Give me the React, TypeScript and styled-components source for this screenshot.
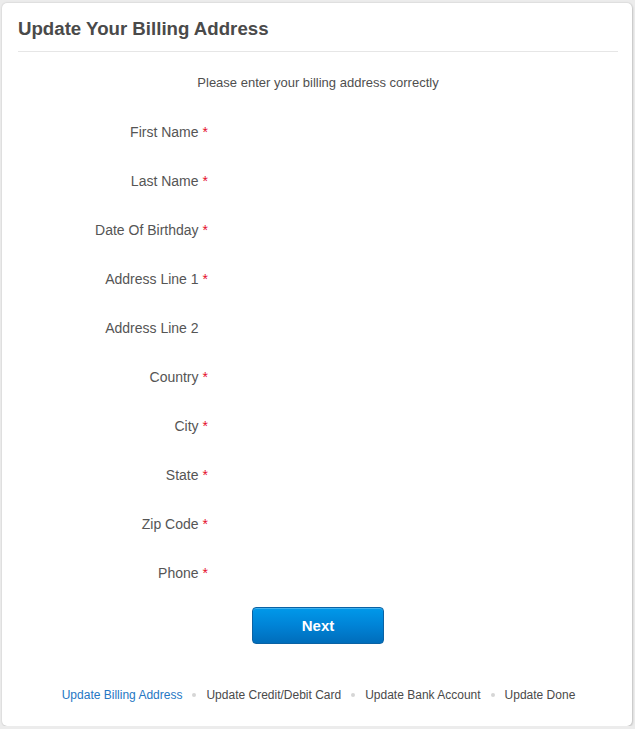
import React from "react";
import styled, { createGlobalStyle } from "styled-components";

const Global = createGlobalStyle`
  html, body { margin: 0; padding: 0; background: #ececec; }
  body { font-family: "Liberation Sans", Arial, sans-serif; }
`;

const Card = styled.div`
  box-sizing: border-box;
  margin: 3px 3px 0 2px;
  width: 630px;
  height: 723px;
  background: #fff;
  border-radius: 5px;
  box-shadow: 0 0 2px rgba(0, 0, 0, 0.18), 1px 1px 2px rgba(0, 0, 0, 0.12);
  padding: 0 14px 0 16px;
  display: flex;
  flex-direction: column;
`;

const Header = styled.div`
  height: 49px;
  display: flex;
  align-items: center;
  border-bottom: 1px solid #e6e6e6;
  box-sizing: border-box;
  padding-top: 3px;
`;

const Title = styled.h1`
  margin: 0;
  font-size: 18.67px;
  font-weight: bold;
  color: #4a4a4a;
  line-height: 22px;
`;

const Subtitle = styled.p`
  margin: 21px 0 0;
  text-align: center;
  font-size: 13px;
  line-height: 20px;
  color: #4f4f4f;
`;

const Form = styled.div`
  margin-top: 14px;
  display: flex;
  flex-direction: column;
`;

const Row = styled.div`
  display: flex;
  align-items: center;
  height: 49px;
`;

const Label = styled.label`
  width: 190px;
  text-align: right;
  font-size: 14px;
  color: #555;
  line-height: 20px;
`;

const Req = styled.span<{ $hidden?: boolean }>`
  color: #e5102b;
  margin-left: 4px;
  visibility: ${(p) => (p.$hidden ? "hidden" : "visible")};
`;

const ButtonWrap = styled.div`
  display: flex;
  justify-content: center;
  margin-top: 10px;
`;

const NextButton = styled.button`
  width: 132px;
  height: 37px;
  box-sizing: border-box;
  border: 1px solid #0a62a4;
  border-radius: 4px;
  background: linear-gradient(to bottom, #0099ea 0%, #0083d6 50%, #006dbb 100%);
  color: #fff;
  font-family: "Liberation Sans", Arial, sans-serif;
  font-weight: bold;
  font-size: 15px;
  cursor: pointer;
  box-shadow: inset 0 1px 0 rgba(255, 255, 255, 0.25);
`;

const Steps = styled.nav`
  margin-top: 41px;
  display: flex;
  justify-content: center;
  align-items: center;
  font-size: 12px;
  line-height: 20px;
  padding-left: 1px;
`;

const Step = styled.span<{ $active?: boolean }>`
  color: ${(p) => (p.$active ? "#2577c4" : "#4a4a4a")};
`;

const Dot = styled.span`
  width: 4px;
  height: 4px;
  border-radius: 50%;
  background: #d6d6d6;
  margin: 0 10px;
`;

const fields: [string, boolean][] = [
  ["First Name", true],
  ["Last Name", true],
  ["Date Of Birthday", true],
  ["Address Line 1", true],
  ["Address Line 2", false],
  ["Country", true],
  ["City", true],
  ["State", true],
  ["Zip Code", true],
  ["Phone", true],
];

const steps = [
  "Update Billing Address",
  "Update Credit/Debit Card",
  "Update Bank Account",
  "Update Done",
];

export default function App() {
  return (
    <>
      <Global />
      <Card>
        <Header>
          <Title>Update Your Billing Address</Title>
        </Header>
        <Subtitle>Please enter your billing address correctly</Subtitle>
        <Form>
          {fields.map(([name, req]) => (
            <Row key={name}>
              <Label>
                {name}
                <Req $hidden={!req}>*</Req>
              </Label>
            </Row>
          ))}
        </Form>
        <ButtonWrap>
          <NextButton>Next</NextButton>
        </ButtonWrap>
        <Steps>
          {steps.map((s, i) => (
            <React.Fragment key={s}>
              {i > 0 && <Dot />}
              <Step $active={i === 0}>{s}</Step>
            </React.Fragment>
          ))}
        </Steps>
      </Card>
    </>
  );
}
